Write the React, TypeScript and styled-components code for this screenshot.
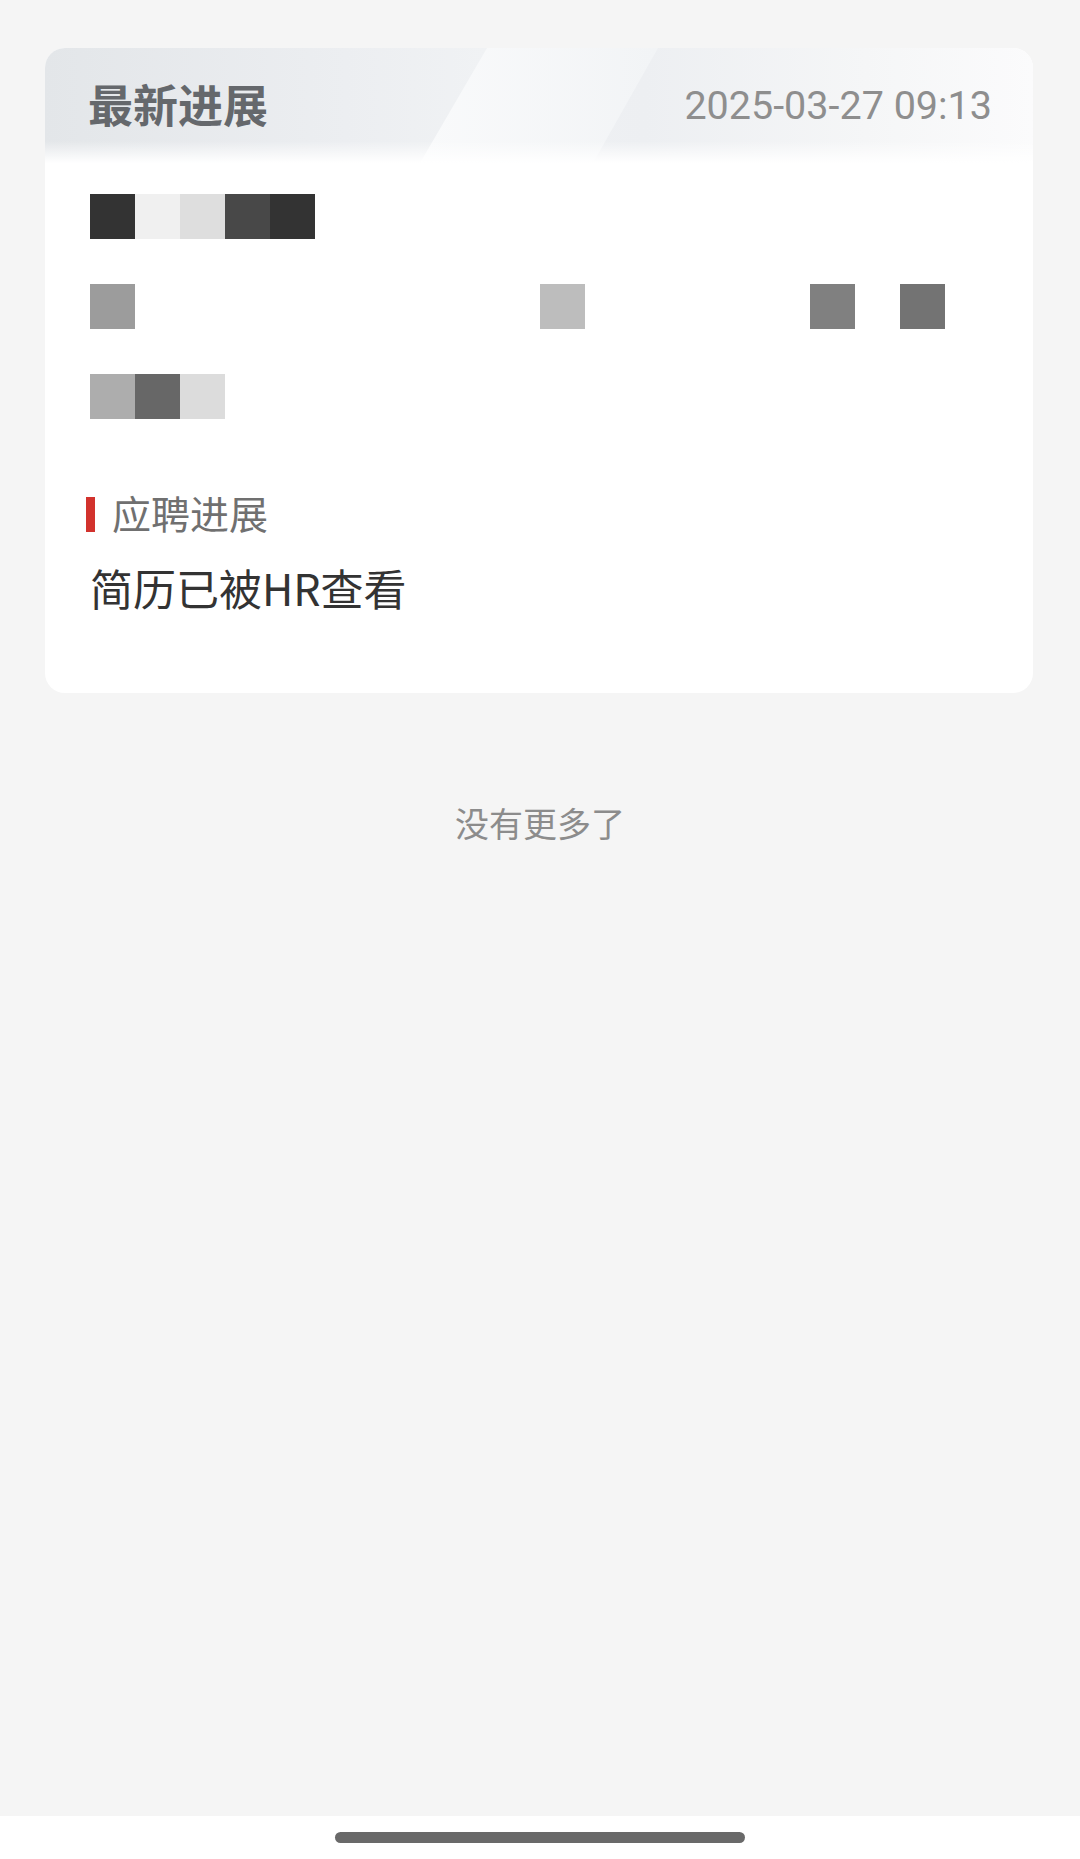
import React from "react";
import styled, { createGlobalStyle } from "styled-components";

const GlobalStyle = createGlobalStyle`
  html, body {
    margin: 0;
    padding: 0;
    background: #f5f5f5;
  }
  body {
    font-family: "Noto Sans CJK SC", "Noto Sans", sans-serif;
  }
  * { box-sizing: border-box; }
`;

const Screen = styled.div`
  width: 1080px;
  min-height: 1859px;
  display: flex;
  flex-direction: column;
`;

const Content = styled.main`
  flex: 1;
  background: #f5f5f5;
  padding: 48px 47px 0 45px;
  display: flex;
  flex-direction: column;
`;

const Card = styled.section`
  background: #ffffff;
  border-radius: 20px;
  overflow: hidden;
  padding-bottom: 81px;
`;

const Header = styled.header`
  position: relative;
  height: 115px;
  display: flex;
  align-items: center;
  justify-content: space-between;
  padding: 0 41px 0 43px;
  background: linear-gradient(
    90deg,
    #e3e6e9 0px,
    #eceef1 300px,
    #f0f2f4 440px,
    #edeff2 600px,
    #f5f6f7 820px,
    #fbfbfc 988px
  );
  &::before {
    content: "";
    position: absolute;
    inset: 0;
    clip-path: polygon(442px 0, 613px 0, 548px 100%, 375px 100%);
    background: linear-gradient(90deg, #f9fafb 380px, #f2f4f6 610px);
  }
  &::after {
    content: "";
    position: absolute;
    left: 0;
    right: 0;
    bottom: 0;
    height: 22px;
    background: linear-gradient(to bottom, rgba(255, 255, 255, 0), #ffffff);
  }
`;

const Title = styled.h2`
  position: relative;
  z-index: 1;
  margin: -5px 0 0;
  font-family: "Noto Sans CJK SC", sans-serif;
  font-weight: 700;
  font-size: 45px;
  line-height: 1;
  color: #65686c;
`;

const Time = styled.span`
  position: relative;
  z-index: 1;
  font-family: Roboto, "Liberation Sans", sans-serif;
  font-size: 39.5px;
  line-height: 1;
  color: #8e8e8e;
`;

const Body = styled.div`
  padding: 31px 45px 0 45px;
  display: flex;
  flex-direction: column;
`;

const Mosaic = styled.div`
  display: flex;
  flex-direction: column;
  gap: 45px;
`;

const MosaicRow = styled.div`
  display: grid;
  grid-template-columns: repeat(19, 45px);
  height: 45px;
`;

const Cell = styled.div<{ $c?: string }>`
  background: ${(p) => p.$c ?? "transparent"};
`;

const Label = styled.div`
  margin-top: 73px;
  margin-left: -4px;
  display: flex;
  align-items: center;
  gap: 17px;
  height: 40px;
`;

const LabelBar = styled.span`
  width: 9px;
  height: 35px;
  margin-top: 4px;
  background: #d2322d;
`;

const LabelText = styled.span`
  font-size: 39px;
  line-height: 40px;
  color: #707070;
`;

const Status = styled.div`
  margin-top: 30px;
  font-size: 43px;
  line-height: 50px;
  color: #333333;
`;

const NoMore = styled.p`
  margin: 110px 0 0;
  text-align: center;
  font-size: 34px;
  line-height: 40px;
  color: #8c8c8c;
  padding-left: 2px;
`;

const BottomBar = styled.div`
  height: 43px;
  background: #ffffff;
  display: flex;
  justify-content: center;
  padding-top: 16px;
`;

const HomeIndicator = styled.div`
  width: 410px;
  height: 11px;
  border-radius: 6px;
  background: #696969;
`;

const rows: (string | null)[][] = [
  ["#333333", "#f0f0f0", "#dedede", "#484848", "#333333"],
  (() => {
    const r: (string | null)[] = Array(19).fill(null);
    r[0] = "#9c9c9c";
    r[10] = "#bdbdbd";
    r[16] = "#808080";
    r[18] = "#737373";
    return r;
  })(),
  ["#adadad", "#676767", "#dcdcdc"],
];

export default function App() {
  return (
    <>
      <GlobalStyle />
      <Screen>
        <Content>
          <Card>
            <Header>
              <Title>最新进展</Title>
              <Time>2025-03-27 09:13</Time>
            </Header>
            <Body>
              <Mosaic>
                {rows.map((row, i) => (
                  <MosaicRow key={i}>
                    {row.map((c, j) => (
                      <Cell key={j} $c={c ?? undefined} />
                    ))}
                  </MosaicRow>
                ))}
              </Mosaic>
              <Label>
                <LabelBar />
                <LabelText>应聘进展</LabelText>
              </Label>
              <Status>简历已被HR查看</Status>
            </Body>
          </Card>
          <NoMore>没有更多了</NoMore>
        </Content>
        <BottomBar>
          <HomeIndicator />
        </BottomBar>
      </Screen>
    </>
  );
}
